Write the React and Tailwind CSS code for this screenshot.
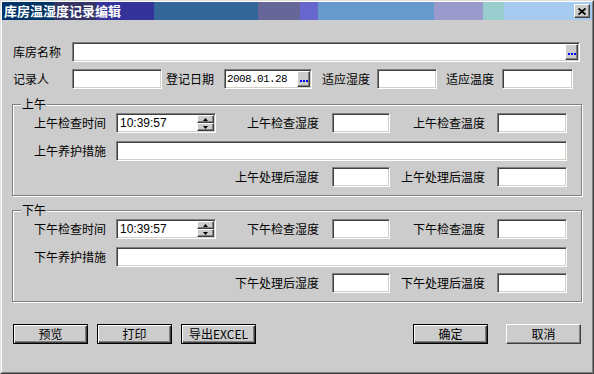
import React from "react";

const FONT = "font-['Noto_Sans_CJK_SC','Noto_Sans_CJK_SC',sans-serif]";
const SUNKEN =
  "bg-white border border-t-[#808080] border-l-[#808080] border-b-white border-r-white shadow-[inset_1px_1px_0_#404040,inset_-1px_-1px_0_#d4d0c8]";
const RAISED =
  "bg-[#cccccc] border border-t-white border-l-white border-b-[#404040] border-r-[#404040] shadow-[inset_-1px_-1px_0_#808080]";

function Field({ w, children, className = "" }) {
  return (
    <div className={`h-[20px] shrink-0 flex items-center ${SUNKEN} ${w} ${className}`}>
      {children}
    </div>
  );
}

function Dots() {
  return (
    <div className={`w-[13px] h-[16px] shrink-0 flex items-end justify-center gap-[1px] pb-[4px] ${RAISED}`}>
      <span className="w-[2px] h-[2px] bg-[#0000ff]" />
      <span className="w-[2px] h-[2px] bg-[#0000ff]" />
      <span className="w-[2px] h-[2px] bg-[#0000ff]" />
    </div>
  );
}

function Label({ w, className = "", children, right }) {
  return (
    <div
      className={`shrink-0 text-[12px] leading-[20px] text-black whitespace-nowrap ${right ? "text-right" : ""} ${w} ${className}`}
    >
      {children}
    </div>
  );
}

function TimeField() {
  return (
    <Field w="w-[100px] ml-[10px]" className="justify-between pl-[3px] pr-[1px]">
      <span className="text-[12px] leading-[16px] font-['Liberation_Sans',sans-serif] text-black">10:39:57</span>
      <div className="flex flex-col w-[17px] h-[16px]">
        <div className={`h-[8px] flex items-center justify-center ${RAISED}`}>
          <svg width="5" height="3" viewBox="0 0 5 3"><path d="M2.5 0 L5 3 L0 3 Z" fill="#000" /></svg>
        </div>
        <div className={`h-[8px] flex items-center justify-center ${RAISED}`}>
          <svg width="5" height="3" viewBox="0 0 5 3"><path d="M0 0 L5 0 L2.5 3 Z" fill="#000" /></svg>
        </div>
      </div>
    </Field>
  );
}

function Group({ title, p }) {
  return (
    <div className="relative w-[570px] border border-[#808080] shadow-[inset_1px_1px_0_#ffffff,1px_1px_0_#ffffff] pt-[8px] pb-[8px]">
      <span className="absolute top-[-7px] left-[8px] px-[1px] bg-[#cccccc] text-[12px] leading-[12px] text-black">
        {title}
      </span>
      <div className="flex items-center h-[20px]">
        <Label w="w-[72px] ml-[21px]">{p}检查时间</Label>
        <TimeField />
        <Label w="w-[103px]" right>{p}检查湿度</Label>
        <Field w="w-[58px] ml-[13px]" />
        <Label w="w-[95px]" right>{p}检查温度</Label>
        <Field w="w-[70px] ml-[12px]" />
      </div>
      <div className="flex items-center h-[20px] mt-[8px]">
        <Label w="w-[72px] ml-[21px]">{p}养护措施</Label>
        <Field w="w-[451px] ml-[10px]" />
      </div>
      <div className="flex items-center h-[20px] mt-[6px]">
        <div className="w-[203px] shrink-0" />
        <Label w="w-[103px]" right>{p}处理后湿度</Label>
        <Field w="w-[58px] ml-[13px]" />
        <Label w="w-[95px]" right>{p}处理后温度</Label>
        <Field w="w-[70px] ml-[12px]" />
      </div>
    </div>
  );
}

function Btn({ children, def, className = "" }) {
  const cls = def
    ? "border border-black shadow-[inset_1px_1px_0_#ffffff,inset_-1px_-1px_0_#404040,inset_-2px_-2px_0_#808080]"
    : RAISED;
  return (
    <div
      className={`w-[75px] h-[20px] shrink-0 flex items-center justify-center bg-[#cccccc] text-[12px] leading-[12px] text-black ${cls} ${className}`}
    >
      {children}
    </div>
  );
}

export default function App() {
  return (
    <div
      className={`w-[594px] h-[374px] flex flex-col bg-[#cccccc] border border-t-[#dfdfdf] border-l-[#dfdfdf] border-b-[#404040] border-r-[#404040] ${FONT}`}
    >
      <div className="flex-1 flex flex-col border border-t-white border-l-white border-b-[#808080] border-r-[#808080]">
        <div className="h-[18px] flex items-center justify-between pl-[2px] pr-[2px] bg-[linear-gradient(90deg,#003366_0px,#003366_52px,#333366_52px,#333366_94px,#333399_94px,#333399_152px,#336699_152px,#336699_256px,#666699_256px,#666699_298px,#6666cc_298px,#6666cc_316px,#6699cc_316px,#6699cc_432px,#9999cc_432px,#9999cc_481px,#99cccc_481px,#99cccc_502px,#a6caf0_502px,#a6caf0_100%)]">
          <span className="text-white font-bold text-[13px] leading-[18px] tracking-[0px]">库房温湿度记录编辑</span>
          <div className={`w-[16px] h-[14px] flex items-center justify-center ${RAISED}`}>
            <svg width="8" height="7" viewBox="0 0 8 7">
              <path d="M0.5 0.5 L7.5 6.5 M7.5 0.5 L0.5 6.5" stroke="#000" strokeWidth="1.8" />
            </svg>
          </div>
        </div>

        <div className="flex flex-col pl-[10px]">
          <div className="flex items-center mt-[22px]">
            <Label w="w-[59px] ml-[1px]">库房名称</Label>
            <Field w="w-[508px]" className="justify-end pr-[1px]">
              <Dots />
            </Field>
          </div>

          <div className="flex items-center mt-[7px]">
            <Label w="w-[59px] ml-[1px]">记录人</Label>
            <Field w="w-[90px]" />
            <Label w="w-[58px] ml-[4px]">登记日期</Label>
            <Field w="w-[88px]" className="justify-between pl-[2px] pr-[1px]">
              <span className="text-[11px] leading-[16px] font-['Liberation_Mono',monospace] tracking-[-0.6px] text-black">2008.01.28</span>
              <Dots />
            </Field>
            <Label w="w-[55px] ml-[10px]">适应湿度</Label>
            <Field w="w-[60px]" />
            <Label w="w-[56px] ml-[9px]">适应温度</Label>
            <Field w="w-[71px]" />
          </div>

          <div className="mt-[15px]">
            <Group title="上午" p="上午" />
          </div>
          <div className="mt-[14px]">
            <Group title="下午" p="下午" />
          </div>

          <div className="flex items-center mt-[22px]">
            <Btn def className="ml-[1px]">预览</Btn>
            <Btn def className="ml-[9px]">打印</Btn>
            <Btn def className="ml-[9px]">导出EXCEL</Btn>
            <Btn def className="ml-[157px]">确定</Btn>
            <Btn className="ml-[18px]">取消</Btn>
          </div>
        </div>
      </div>
    </div>
  );
}
